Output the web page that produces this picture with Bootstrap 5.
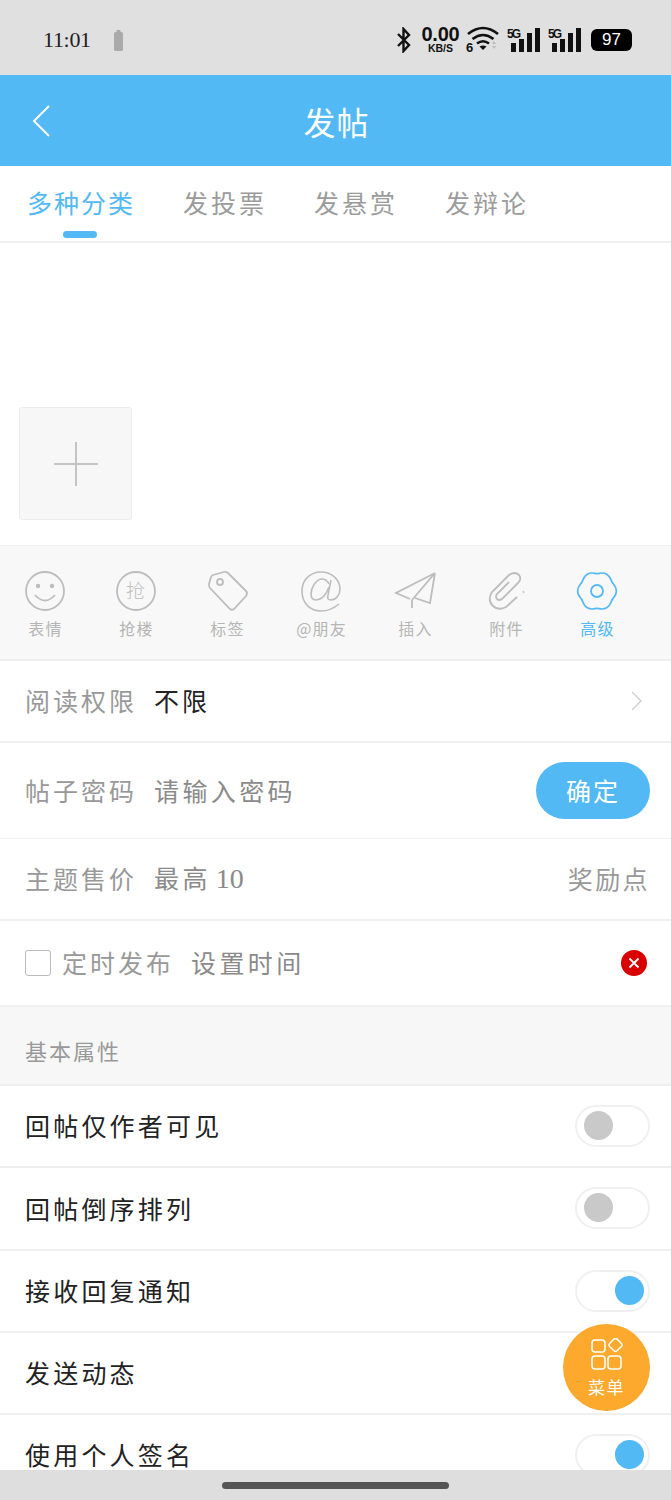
<!DOCTYPE html>
<html lang="zh"><head><meta charset="utf-8"><title>发帖</title>
<link rel="stylesheet" href="https://cdn.jsdelivr.net/npm/bootstrap@5.3.0/dist/css/bootstrap.min.css">
<style>
html,body{margin:0;height:1500px;overflow:hidden;background:#fff}
body{font-family:"Noto Sans CJK SC","Noto Sans CJK JP",sans-serif;font-weight:400}
.phone{width:671px;height:1500px;position:relative;overflow:hidden}
.stat-bar{height:75px;background:#e0e0e0;padding:4px 39px 0 43px;color:#111}
.clock{font:22px/1 "Liberation Serif",serif;color:#222;width:48px;margin-right:22px;letter-spacing:-.3px}
.kbs{line-height:1;width:39px;font-family:"Liberation Sans",sans-serif;text-align:center;margin:0 6px 0 9px}
.kbs b{display:block;font-size:20px;line-height:17px;font-weight:700;letter-spacing:-.2px}
.kbs i{display:block;font-style:normal;font-size:10.500px;line-height:10px;font-weight:700}
.sig-a{margin-left:7px}
.sig-b{margin-left:8px}
.batt{width:41px;height:22px;background:#000;color:#fff;border-radius:6px;font:17px/22px "Liberation Sans",sans-serif;text-align:center;margin-left:10px}
.top-bar{height:91px;background:#52b9f5;color:#fff;position:relative}
.top-title{font-size:32px;letter-spacing:1px;line-height:1;font-weight:400;margin-left:2px}
.back-ic{position:absolute;left:32px;top:30px}
.tab-row{height:77px;border-bottom:2px solid #f0f0f0;padding-left:27px;gap:47px}
.tab-it{font-size:25px;letter-spacing:3px;color:#9b9b9b;position:relative;line-height:73px;height:75px}
.tab-it.on{color:#52b9f5;letter-spacing:2px;margin-right:1px}
.tab-it.on::after{content:"";position:absolute;left:36px;top:65px;width:34px;height:7px;background:#52b9f5;border-radius:4px}
.edit-area{height:302px;padding:164px 0 0 19px}
.add-box{width:113px;height:113px;background:#f7f7f7;border:1px solid #ececec;border-radius:3px}
.tool-row{height:116px;background:#f8f8f8;border-top:1px solid #efefef;border-bottom:2px solid #efefef;padding:0}
.tool-it{width:91px;padding-top:25px;text-align:center;font-size:16px;letter-spacing:1.200px;color:#b5b5b5;line-height:20px}
.tool-it:first-child{margin-left:-1px}
.tool-wide{width:97px}
.tool-it svg{display:block;margin:0 auto 7px;overflow:visible}
.tool-cap{display:block;padding-left:2px}
.tool-it.on{color:#52b9f5}
.form-line{padding:0 21px 0 25px;border-bottom:2px solid #f0f0f0;font-size:25px;letter-spacing:3px;color:#999}
.lbl{width:129px;flex:none}
.val-dark{color:#222}
.val-mid{color:#8a8a8a;letter-spacing:3.400px;word-spacing:-4px}
.rw{letter-spacing:2.400px}
.num{font-family:"Liberation Serif",serif;font-size:28px;letter-spacing:0;font-weight:400}
.h82{height:82px}.h96{height:96px}.h86{height:86px}
.thin-b{border-bottom-width:1px}
.ok-btn{width:114px;height:57px;border-radius:29px;background:#52b9f5;color:#fff;font-size:25px;letter-spacing:2px;line-height:57px;padding:0;border:0}
.chk{width:26px;height:26px;border:1px solid #bbb;border-radius:3px;background:#fff;margin-right:11px;flex:none}
.no-ic{margin-right:3px}
.sect{height:79px;background:#f7f7f7;border-bottom:2px solid #efefef;padding:0 25px;font-size:22px;letter-spacing:2px;color:#999;line-height:86px}
.opt{height:82.250px;padding:0 21px 0 25px;border-bottom:2px solid #f0f0f0;font-size:25px;letter-spacing:3.200px;color:#222}
.togl{width:75px;height:42px;border:2px solid #f0f0f0;border-radius:21px;background:#fff;padding:4px 4px 4px 7px;flex:none}
.togl span{display:block;width:29px;height:29px;border-radius:50%;background:#c9c9c9}
.togl.on{justify-content:flex-end}
.togl.on span{background:#52b9f5}
.home-bar{position:absolute;left:0;right:0;bottom:0;height:30px;background:#dedede}
.home-bar span{width:227px;height:7px;border-radius:4px;background:#555}
.fab{position:absolute;left:563px;top:1324px;width:87px;height:87px;border-radius:50%;background:#fca92e;color:#fff;font-size:17px;letter-spacing:1.500px;line-height:1;text-align:center;padding-top:14px}
.fab svg{display:block;margin:0 auto 8px}
</style></head><body>
<div class="phone">
 <div class="stat-bar d-flex align-items-center">
  <span class="clock">11:01</span>
  <svg width="11" height="22" viewBox="0 0 11 22"><rect x="1" y="3" width="9" height="19" rx="1.500" fill="#aaa"/><rect x="3.500" y="1" width="4" height="3" fill="#aaa"/></svg>
  <span class="flex-grow-1"></span>
  <svg width="16" height="26" viewBox="0 0 16 26"><path d="M2 7l11 11-5.500 6V2L13 8 2 19" fill="none" stroke="#111" stroke-width="2.400"/></svg>
  <div class="kbs"><b>0.00</b><i>KB/S</i></div>
  <svg width="34" height="28" viewBox="0 0 34 28"><path d="M2 8q15-12 30 0M6.500 13q10.500-8 21 0M11 17.500q6-4.500 12 0" fill="none" stroke="#111" stroke-width="2.600"/><path d="M13.500 20.500q3.500-2 7 0l-3.500 3.500z" fill="#111"/><text x="0" y="26" font-family="Liberation Sans" font-weight="700" font-size="13" fill="#111">6</text><path d="M26 18l2-3 2 3zM26 20l2 3 2-3z" fill="#bbb"/></svg>
  <svg class="sig-a" width="33" height="26" viewBox="0 0 33 26"><text x="0" y="11" font-family="Liberation Sans" font-weight="700" font-size="12" textLength="14" fill="#111">5G</text><rect x="4" y="16" width="5" height="9" fill="#111"/><rect x="12" y="12" width="5" height="13" fill="#111"/><rect x="20" y="6" width="5" height="19" fill="#111"/><rect x="28" y="1" width="5" height="24" fill="#111"/></svg>
  <svg class="sig-b" width="33" height="26" viewBox="0 0 33 26"><text x="0" y="11" font-family="Liberation Sans" font-weight="700" font-size="12" textLength="14" fill="#111">5G</text><rect x="4" y="16" width="5" height="9" fill="#111"/><rect x="12" y="12" width="5" height="13" fill="#111"/><rect x="20" y="6" width="5" height="19" fill="#111"/><rect x="28" y="1" width="5" height="24" fill="#111"/></svg>
  <div class="batt">97</div>
 </div>
 <div class="top-bar d-flex align-items-center justify-content-center">
  <svg class="back-ic" width="20" height="32" viewBox="0 0 20 32"><path d="M17 1L2 16l15 15" fill="none" stroke="#fff" stroke-width="2"/></svg>
  <span class="top-title">发帖</span>
 </div>
 <div class="tab-row d-flex">
  <div class="tab-it on">多种分类</div><div class="tab-it">发投票</div><div class="tab-it">发悬赏</div><div class="tab-it">发辩论</div>
 </div>
 <div class="edit-area">
  <div class="add-box d-flex align-items-center justify-content-center">
   <svg width="44" height="44" viewBox="0 0 44 44"><path d="M22 0v44M0 22h44" stroke="#c4c4c4" stroke-width="2"/></svg>
  </div>
 </div>
 <div class="tool-row d-flex">
  <div class="tool-it"><svg width="40" height="40" viewBox="0 0 40 40" fill="none" stroke="#bdbdbd" stroke-width="1.800"><circle cx="20" cy="20" r="19"/><circle cx="13" cy="15" r="1.300" fill="#bdbdbd"/><circle cx="27" cy="15" r="1.300" fill="#bdbdbd"/><path d="M10 24q10 11 20 0"/></svg><span class="tool-cap">表情</span></div>
  <div class="tool-it"><svg width="40" height="40" viewBox="0 0 40 40" fill="none" stroke="#bdbdbd" stroke-width="1.800"><circle cx="20" cy="20" r="19"/><text x="20" y="27" text-anchor="middle" font-family="Noto Sans CJK SC" font-size="19" font-weight="300" fill="#bdbdbd" stroke="none">抢</text></svg><span class="tool-cap">抢楼</span></div>
  <div class="tool-it"><svg width="40" height="40" viewBox="0 0 40 40" fill="none" stroke="#bdbdbd" stroke-width="1.800"><path transform="translate(1 0)" d="M5 4L16 1Q18 .5 20 2L38 20Q40 22 38 25L26 38Q24 39.500 22 38L2 17Q.5 15 1 13L3 6Q3.500 4.500 5 4z"/><circle cx="13" cy="11" r="3"/></svg><span class="tool-cap">标签</span></div>
  <div class="tool-it tool-wide"><svg width="40" height="40" viewBox="0 0 40 40" fill="none" stroke="#bdbdbd" stroke-width="1.600"><path d="M38 33C32 38 27 40 20 40C8 40 1 31 1 20C1 9 9 1 20 1C31 1 39 9 39 18C39 24 35 29 30 29C27 29 26 27 27 24L30 9"/><path d="M28 13C26 9 24 8 21 8C15 8 10 17 10 23C10 27 12 29 15 29C20 29 25 24 28 16"/></svg><span class="tool-cap">@朋友</span></div>
  <div class="tool-it"><svg width="40" height="40" viewBox="0 0 40 40" fill="none" stroke="#bdbdbd" stroke-width="1.800"><path transform="translate(1 0)" d="M39 2L0 22L14 28M39 2L34 32L19 27M39 2L16 29V37"/></svg><span class="tool-cap">插入</span></div>
  <div class="tool-it"><svg width="40" height="40" viewBox="0 0 40 40" fill="none" stroke="#bdbdbd" stroke-width="1.800"><path transform="translate(2 0)" d="M29 26L18 36Q10 40 5 35Q-1 29 4 21L21 4Q27 0 31 4Q34 8 30 12L14 28Q11 30 9 28Q7 26 9 23L21 11M35 21.500l1-1"/></svg><span class="tool-cap">附件</span></div>
  <div class="tool-it on"><svg width="40" height="40" viewBox="0 0 40 40" fill="none" stroke="#52b9f5" stroke-width="1.800"><path transform="translate(.6 .6) scale(.97)" d="M40 20C40 25 36.840 26.830 35.590 29C34.340 31.170 34.330 34.820 30 37.320C25.670 39.820 22.500 38 20 38C17.500 38 14.330 39.820 10 37.320C5.670 34.820 5.660 31.170 4.410 29C3.160 26.830 0 25 0 20C0 15 3.160 13.170 4.410 11C5.660 8.830 5.670 5.180 10 2.680C14.330 .18 17.500 2 20 2C22.500 2 25.670 .18 30 2.680C34.330 5.180 34.340 8.830 35.590 11C36.840 13.170 40 15 40 20z"/><circle cx="20" cy="20" r="6"/></svg><span class="tool-cap">高级</span></div>
 </div>
 <div class="form-line h82 d-flex align-items-center"><span class="lbl">阅读权限</span><span class="val-dark flex-grow-1">不限</span>
  <svg class="me-2" width="11" height="20" viewBox="0 0 11 20"><path d="M1 1l9 9-9 9" fill="none" stroke="#ccc" stroke-width="1.300"/></svg></div>
 <div class="form-line h96 thin-b d-flex align-items-center"><span class="lbl">帖子密码</span><span class="val-mid flex-grow-1">请输入密码</span><button class="btn ok-btn" type="button">确定</button></div>
 <div class="form-line h82 d-flex align-items-center"><span class="lbl">主题售价</span><span class="val-mid flex-grow-1">最高 <span class="num">10</span></span><span class="rw">奖励点</span></div>
 <div class="form-line h86 d-flex align-items-center"><span class="chk"></span><span class="lbl">定时发布</span><span class="val-mid flex-grow-1">设置时间</span>
  <svg class="no-ic" width="26" height="26" viewBox="0 0 26 26"><circle cx="13" cy="13" r="13" fill="#d90000"/><path d="M8.500 8.500l9 9M17.500 8.500l-9 9" stroke="#fff" stroke-width="1.800"/></svg></div>
 <div class="sect">基本属性</div>
 <div class="opt d-flex align-items-center justify-content-between"><span>回帖仅作者可见</span><div class="togl d-flex"><span></span></div></div>
 <div class="opt d-flex align-items-center justify-content-between"><span>回帖倒序排列</span><div class="togl d-flex"><span></span></div></div>
 <div class="opt d-flex align-items-center justify-content-between"><span>接收回复通知</span><div class="togl on d-flex"><span></span></div></div>
 <div class="opt d-flex align-items-center justify-content-between"><span>发送动态</span></div>
 <div class="opt d-flex align-items-center justify-content-between"><span>使用个人签名</span><div class="togl on d-flex"><span></span></div></div>
 <div class="home-bar d-flex align-items-center justify-content-center"><span></span></div>
 <div class="fab"><svg width="32" height="32" viewBox="0 0 32 32" fill="none" stroke="#fff" stroke-width="1.500"><rect x="1" y="2" width="13" height="12" rx="3"/><rect x="19.200" y="1.700" width="10.500" height="10.500" rx="2.500" transform="rotate(45 24.500 7)"/><rect x="1" y="18" width="13" height="13" rx="3"/><rect x="17" y="18" width="13" height="13" rx="3"/></svg>菜单</div>
</div>
<script src="https://cdn.jsdelivr.net/npm/bootstrap@5.3.0/dist/js/bootstrap.bundle.min.js"></script>
</body></html>
